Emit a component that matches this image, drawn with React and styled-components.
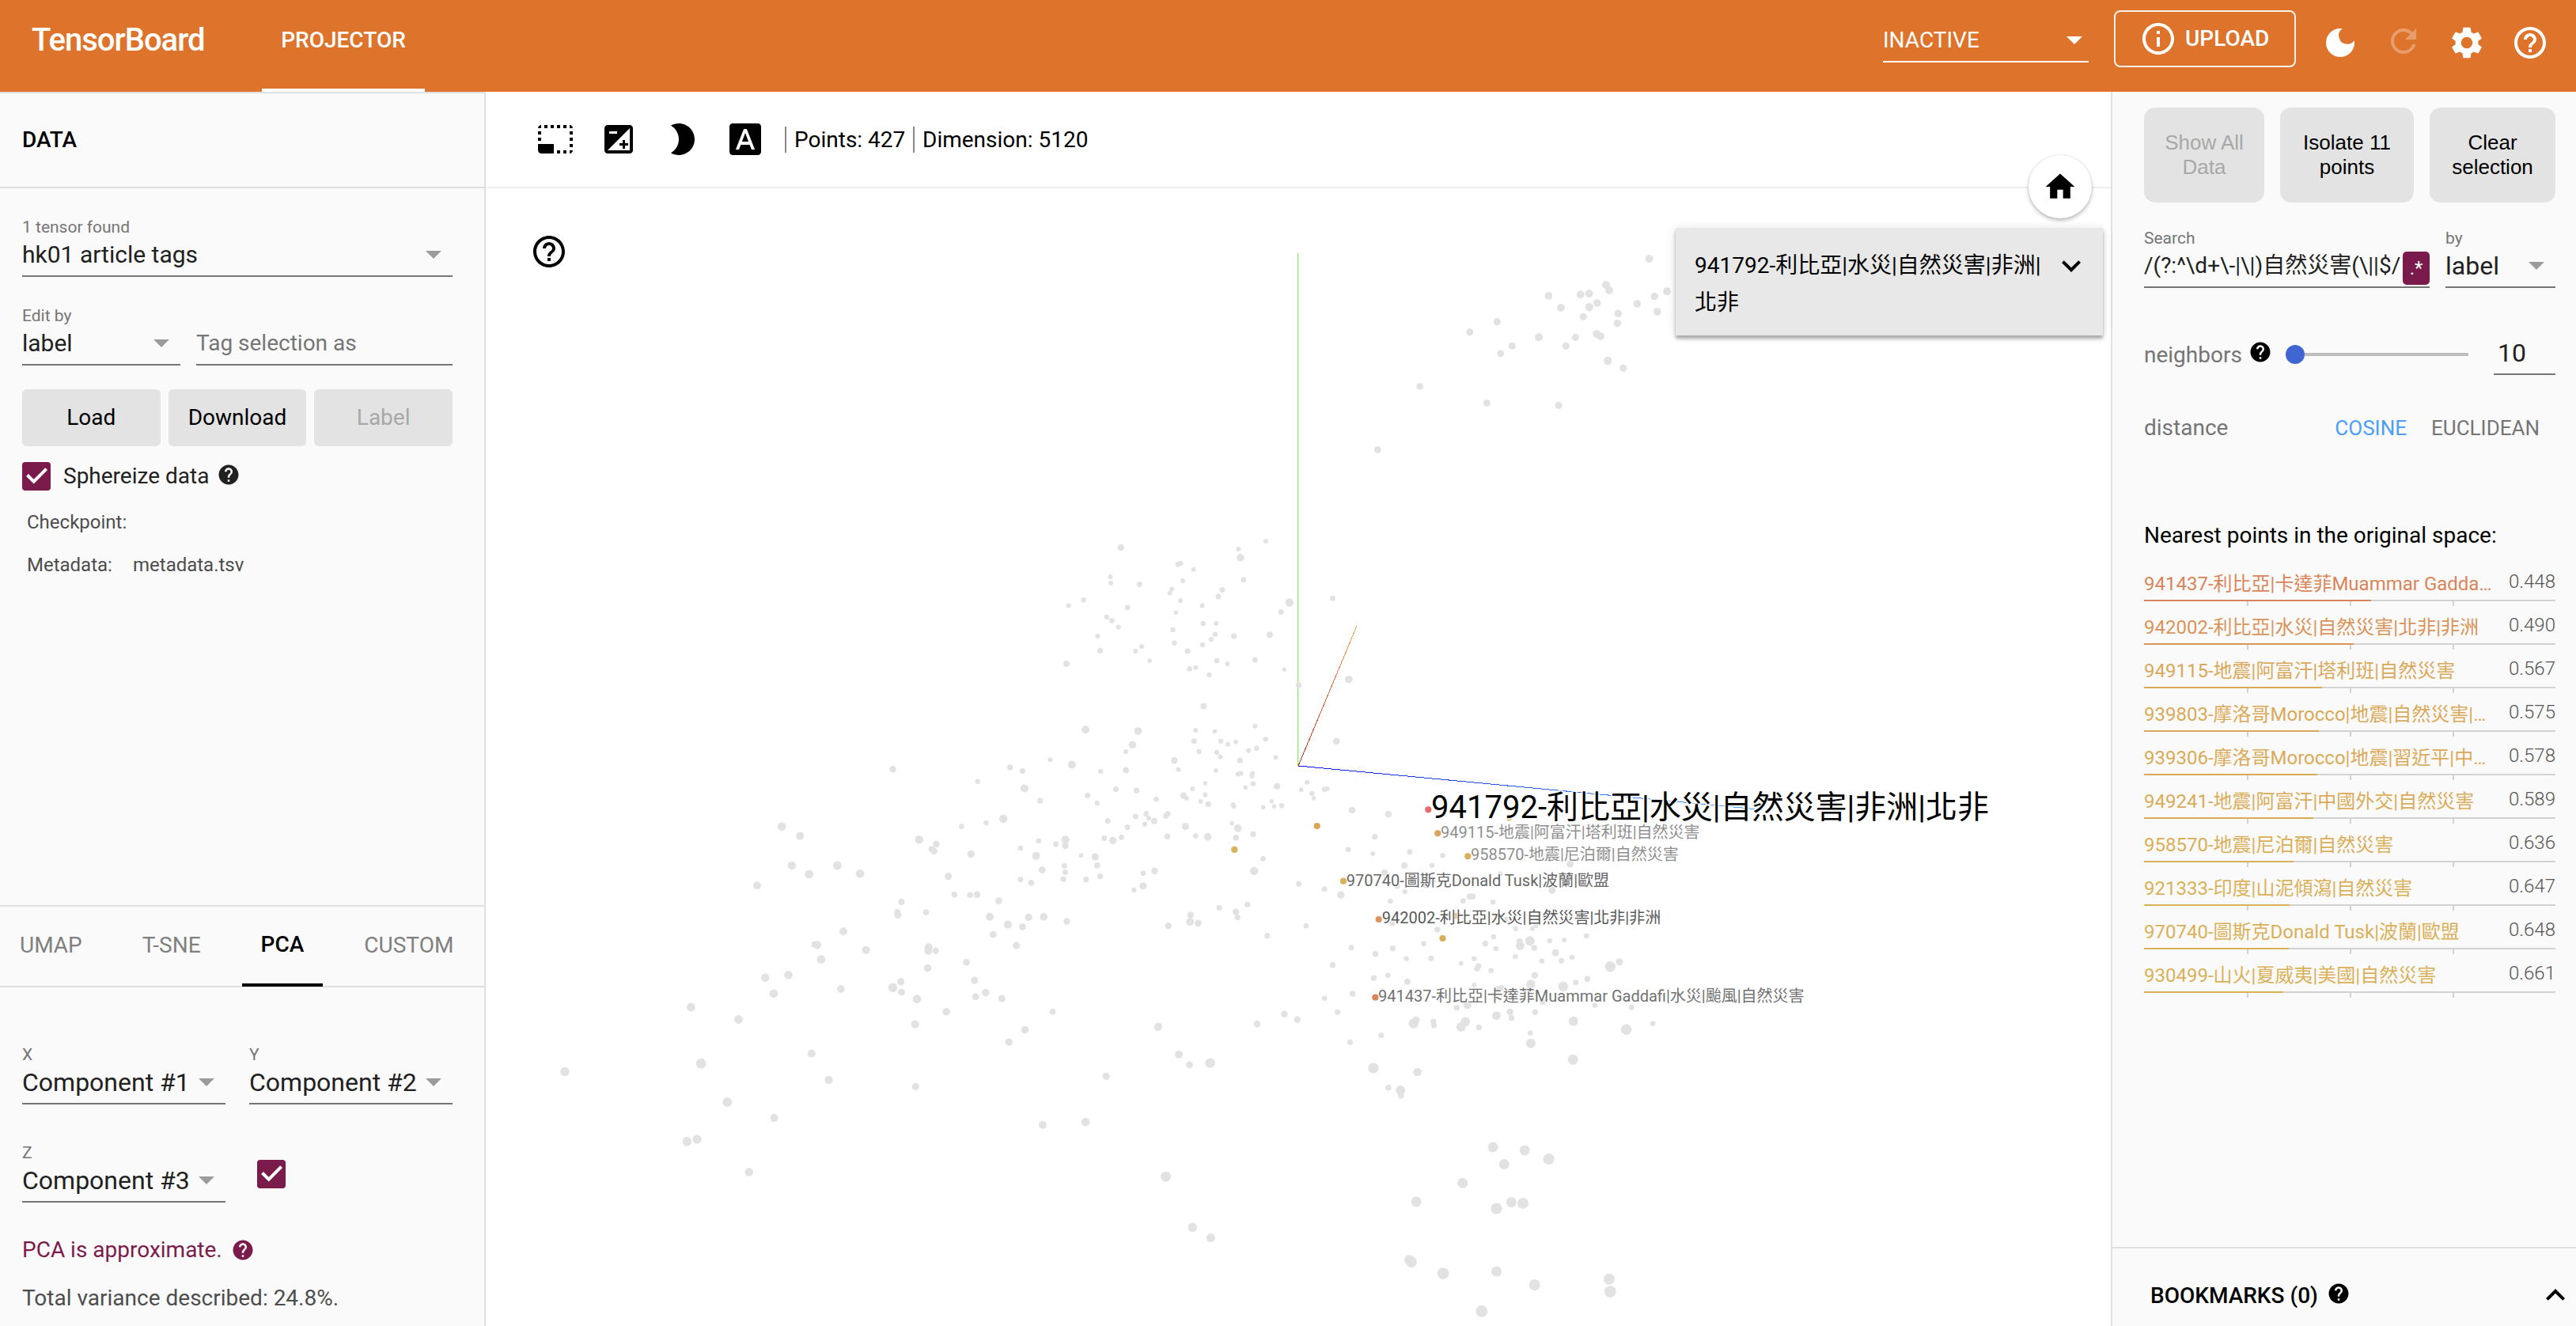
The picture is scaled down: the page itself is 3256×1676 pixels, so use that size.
import React from 'react';
import styled, { createGlobalStyle } from 'styled-components';
import {
  MdBrightness2,
  MdDarkMode,
  MdExpandLess,
  MdExpandMore,
  MdExposure,
  MdFontDownload,
  MdHelp,
  MdHelpOutline,
  MdHome,
  MdInfoOutline,
  MdPhotoSizeSelectSmall,
  MdRefresh,
  MdSettings,
} from 'react-icons/md';

const GlobalStyle = createGlobalStyle`
  * { box-sizing: border-box; }
  html, body { margin: 0; padding: 0; }
  body {
    font-family: Roboto, "Noto Sans CJK TC", sans-serif;
    font-size: 28px;
    color: #212121;
    background: #fff;
    overflow: hidden;
  }
  svg { display: block; flex: none; }
`;

const accent = '#7b1b4b';
const line = '#e0e0e0';

/* ---------- page frame ---------- */

const Page = styled.div`
  display: flex;
  flex-direction: column;
  width: 3256px;
  height: 1676px;
`;

const Header = styled.header`
  display: flex;
  align-items: flex-start;
  flex: none;
  height: 116px;
  background: #de742c;
  color: #fff;
`;

const Brand = styled.h1`
  margin: 0;
  width: 331px;
  padding-left: 40px;
  font-size: 40px;
  font-weight: 500;
  letter-spacing: -1px;
  line-height: 102px;
`;

const NavTab = styled.div`
  height: 116px;
  width: 206px;
  border-bottom: 4px solid #fff;
  text-align: center;
  font-weight: 500;
  line-height: 102px;
`;

const Spacer = styled.div`
  flex: 1;
`;

const ReloadSelect = styled.div`
  display: flex;
  align-items: center;
  justify-content: space-between;
  width: 260px;
  height: 54px;
  margin: 25px 32px 0 0;
  padding-right: 8px;
  border-bottom: 2px solid #fff;
  line-height: 52px;
`;

const Caret = styled.span`
  flex: none;
  border: 10px solid transparent;
  border-bottom-width: 0;
  border-top-color: ${(p) => p.$color || '#9b9b9b'};
`;

const UploadButton = styled.div`
  display: flex;
  align-items: center;
  gap: 10px;
  width: 230px;
  height: 72px;
  margin: 13px 32px 0 0;
  padding-left: 30px;
  border: 2px solid rgba(255, 255, 255, 0.9);
  border-radius: 8px;
  font-weight: 500;
  line-height: 68px;
`;

const HeaderIcons = styled.div`
  display: flex;
  gap: 32px;
  margin: 30px 34px 0 0;
`;

const HeaderIcon = styled.span`
  margin-top: ${(p) => (p.$disabled ? '-2px' : '0')};
  opacity: ${(p) => (p.$disabled ? 0.3 : 1)};
`;

const Body = styled.main`
  display: flex;
  flex: 1;
  min-height: 0;
`;

/* ---------- shared form parts ---------- */

const Field = styled.div`
  display: flex;
  flex-direction: column;
  width: ${(p) => p.$w}px;
  height: 76px;
  border-bottom: 2px solid #757575;
`;

const FieldLabel = styled.div`
  height: 26px;
  line-height: 26px;
  font-size: 21px;
  color: #757575;
`;

const FieldValue = styled.div`
  display: flex;
  align-items: center;
  justify-content: space-between;
  height: 44px;
  padding-right: ${(p) => (p.$flush ? 0 : 14)}px;
  font-size: ${(p) => p.$size || 30}px;
  line-height: 44px;
  white-space: nowrap;
  color: ${(p) => (p.$placeholder ? '#757575' : '#212121')};
`;

const CheckMark = styled.span`
  display: block;
  width: 36px;
  height: 36px;
  border-radius: 4px;
  background: ${accent};
`;

function Checkbox() {
  return (
    <CheckMark>
      <svg width="36" height="36" viewBox="0 0 36 36" fill="none" stroke="#fff" strokeWidth="4">
        <path d="M6.5 16.5 L14.7 24.6 L30.6 8.6" />
      </svg>
    </CheckMark>
  );
}

function Select({ label, value, width, size }) {
  return (
    <Field $w={width}>
      <FieldLabel>{label}</FieldLabel>
      <FieldValue $size={size}>
        <span>{value}</span>
        <Caret />
      </FieldValue>
    </Field>
  );
}

/* ---------- left panel ---------- */

const LeftPanel = styled.aside`
  display: flex;
  flex-direction: column;
  flex: none;
  width: 614px;
  background: #fafafa;
  border-top: 2px solid ${line};
  border-right: 2px solid ${line};
`;

const PanelTitle = styled.h2`
  margin: 0;
  height: 120px;
  padding-left: 28px;
  border-bottom: 2px solid ${line};
  font-size: 28px;
  font-weight: 500;
  line-height: 118px;
  color: #000;
`;

const DataForm = styled.section`
  display: flex;
  flex-direction: column;
  padding: 36px 40px 0 28px;
`;

const FieldRow = styled.div`
  display: flex;
  justify-content: space-between;
  margin-top: ${(p) => p.$mt}px;
`;

const ButtonRow = styled.div`
  display: grid;
  grid-template-columns: repeat(3, 1fr);
  gap: 10px;
  margin-top: 30px;
`;

const Button = styled.div`
  height: 72px;
  border-radius: 6px;
  background: #e3e3e3;
  text-align: center;
  line-height: 72px;
  color: ${(p) => (p.$disabled ? '#a8a8a8' : '#000')};
`;

const CheckRow = styled.div`
  display: flex;
  align-items: center;
  height: 36px;
  margin: 20px 0 13px;
  line-height: 36px;
`;

const CheckLabel = styled.span`
  margin: 0 10px 0 16px;
`;

const CheckHint = styled.span`
  margin-top: -4px;
`;

const MetaRow = styled.div`
  display: flex;
  height: 54px;
  padding-left: 6px;
  font-size: 24px;
  line-height: 54px;
  color: #4d4d4d;
`;

const MetaKey = styled.span`
  width: 134px;
`;

const ProjectionSection = styled.section`
  margin-top: auto;
  height: 532px;
  border-top: 2px solid ${line};
`;

const Tabs = styled.div`
  display: flex;
  gap: 28px;
  height: 102px;
  padding-left: 1px;
  border-bottom: 2px solid ${line};
`;

const Tab = styled.div`
  height: 101px;
  padding: 0 24px;
  border-bottom: 4px solid ${(p) => (p.$active ? '#000' : 'transparent')};
  font-weight: ${(p) => (p.$active ? 500 : 400)};
  line-height: ${(p) => (p.$active ? 95 : 98)}px;
  color: ${(p) => (p.$active ? '#000' : '#808080')};
`;

const PcaForm = styled.div`
  padding: 72px 40px 0 28px;
`;

const CheckSlot = styled.div`
  width: 247px;
  padding-top: 22px;
`;

const Notice = styled.div`
  display: flex;
  align-items: center;
  gap: 11px;
  height: 36px;
  margin-top: 42px;
  line-height: 36px;
  color: ${accent};
`;

const Variance = styled.div`
  margin-top: 25px;
  line-height: 36px;
  color: #4d4d4d;
`;

/* ---------- centre ---------- */

const Center = styled.section`
  display: flex;
  flex-direction: column;
  flex: 1;
  min-width: 0;
  background: #fff;
`;

const Toolbar = styled.div`
  display: flex;
  align-items: center;
  flex: none;
  height: 122px;
  padding-left: 64px;
  border-bottom: 2px solid #eee;
  color: #000;
`;

const ToolIcons = styled.div`
  display: flex;
  gap: 32px;
  margin-right: 26px;
`;

const Stat = styled.div`
  width: ${(p) => p.$w}px;
  padding-left: 10px;
  border-left: 2px solid #888;
  line-height: 33px;
  white-space: nowrap;
`;

const Stage = styled.div`
  position: relative;
  flex: 1;
`;

const StageHelp = styled.div`
  position: absolute;
  left: 56px;
  top: 56px;
  color: #000;
`;

const HomeButton = styled.div`
  position: absolute;
  left: 1950px;
  top: -42px;
  display: flex;
  align-items: center;
  justify-content: center;
  width: 80px;
  height: 80px;
  border-radius: 50%;
  background: #fff;
  color: #000;
  box-shadow: 0 3px 5px rgba(0, 0, 0, 0.24), 0 0 3px rgba(0, 0, 0, 0.12);
`;

const InfoCard = styled.div`
  position: absolute;
  left: 1504px;
  top: 50px;
  display: flex;
  justify-content: space-between;
  width: 540px;
  height: 136px;
  padding: 24px 16px 0 24px;
  background: #e8e8e8;
  color: #000;
  box-shadow: 0 4px 4px rgba(0, 0, 0, 0.3), 0 1px 12px rgba(0, 0, 0, 0.12);
`;

const InfoText = styled.div`
  width: 442px;
  line-height: 47px;
  word-break: break-all;
`;

/* Point clouds: each is stored in local units with its own origin and scale. */
const clouds = [
  {
    origin: [1700, 300],
    scale: [3, 3],
    points: [
      [1154,81,5],[990,181,5],[1002,201,5],[772,222,4.8],[893,217,5],[926,213,5],[1174,224,4.8],[1221,205,5],[956,249,4.8],
      [819,267,5],[926,264,5.2],[1108,252,4.8],[1184,282,4.8],[904,301,4.6],[1036,289,4.8],[1033,326,4.8],[577,320,4.6],
      [473,359,4.6],[735,379,5],[874,379,4.6],[954,366,4.8],[969,375,5],[634,412,4.7],[838,412,4.6],[590,441,4.4],
      [997,468,5.2],[1055,496,4.6],[284,565,4.4],[538,628,4.4],[810,637,4.6],[124,805,4.4],
    ],
  },
  {
    origin: [640, 660],
    scale: [1.568, 1.7422],
    points: [
      [1218,56,4.2],[1451,59,3],[1455,78,4.8],[1331,93,3.3],[1336,91,3.3],[1362,104,3],[1197,120,3],[1198,134,3],
      [1255,137,3.3],[1341,129,3],[1461,127,3.3],[1319,147,3],[1315,156,3],[1419,149,3.5],[1411,164,3.5],[1144,171,3.3],
      [1114,184,3],[1336,173,3],[1379,184,3],[1231,188,3.3],[1327,199,2.8],[1190,209,3.3],[1200,217,3.3],[1213,231,3.1],
      [1381,223,3.2],[1407,223,3],[1321,237,3.2],[1405,247,3.2],[1397,258,3.2],[1442,251,3.6],[1172,251,3],[1324,266,3.2],
      [1380,270,3.2],[1259,274,3],[1247,284,3],[1177,283,3.5],[1350,284,3.6],[1275,305,2.8],[1408,305,3.3],[1429,312,3],
      [1484,303,3.5],[1110,312,4],[1354,323,3.3],[1366,320,3],[1393,336,3.2],[1382,405,4],[1484,449,3],[1148,457,5],
      [1252,460,4.8],[1366,458,3],[1404,461,2.8],[1504,478,2.8],[1363,482,3.4],[1416,482,3.2],[1430,489,3],[1446,484,2.8],
      [1241,490,4.8],[1487,498,3.2],[1471,503,3],[1228,505,3],[1373,505,3.2],[1408,507,3.2],[1415,517,3],[1324,525,4.2],
      [1454,525,3.6],[1078,523,3],[1121,534,5],[998,540,3.8],[1023,548,3.6],[1178,549,3.2],[1228,546,3.8],[1332,545,3],
      [1406,547,2.9],[1450,555,3],[1456,553,3],[1479,553,3],[1478,559,3],[766,544,4.2],[934,571,3.2],[1027,586,5],
      [1385,575,2.8],[1480,576,3.2],[1465,584,2.8],[1360,587,3],[1208,588,3.6],[1249,591,3.6],[1152,602,3.5],[1058,613,3.6],
      [1342,602,4],[1385,600,3],[1348,608,2.8],[1288,610,3.2],[1376,615,3],[1391,621,3.6],[1440,622,3],[1442,626,3],
      [1171,619,3.2],[1500,628,2.8],[985,653,5.2],[1268,642,3.4],[1311,642,3.6],[1307,647,3.4],[1247,648,3.4],[1273,652,3],
      [1284,658,4],[1265,665,3.2],[1192,658,3.6],[951,662,3.2],[902,670,3.4],[1231,672,3.4],[1346,670,4.6],[1438,663,2.8],
      [1450,674,4.8],[546,670,5.4],[582,691,5],[1480,687,3.6],[1446,695,3.8],[1366,691,3.4],[1390,693,4.8],[1310,692,3.8],
      [1219,694,3.4],[1185,696,3.4],[1202,701,4.6],[1108,699,5],[1108,712,4.2],[1055,702,3.4],[1089,709,3.4],[818,699,5.2],
      [852,709,4.2],[843,720,4],[848,725,4],[921,731,4.6],[1019,718,3.4],[1050,735,5],[1139,734,3],[1167,737,4.6],
      [1500,741,3.4],[566,756,5.2],[600,775,5.4],[656,756,5.4],[701,774,5.2],[497,800,5],[876,780,4.6],[1062,766,4.4],
      [1106,757,3.4],[1171,756,3.8],[1108,771,3.4],[1104,786,3.6],[1019,787,3.4],[1040,794,3.8],[1149,787,3.6],[1177,780,3.6],
      [1262,773,3.4],[1285,768,4.2],[1262,801,4.6],[1244,810,3.2],[1482,768,5.2],[783,836,4],[888,820,3.8],[919,821,3.8],
      [933,820,4.2],[976,834,4.4],[775,858,3.8],[776,865,4.6],[832,859,3.8],[958,869,5],[1035,870,4.6],[1065,869,4.8],
      [994,886,5],[1023,891,4.4],[1111,879,4.2],[965,908,4.4],[668,901,5],[1011,932,4.6],[1312,889,4.2],[1356,865,4],
      [1355,880,5],[1371,883,4.4],[1413,849,3.6],[1446,858,4.2],[1449,870,3.6],[1469,842,3.6],[611,930,4],[616,931,5.2],
      [713,942,5],[837,936,5],[836,944,5],[851,944,4.2],[624,963,5.4],[912,969,4.4],[835,982,4.8],[559,997,5.4],
      [513,1003,5.2],[663,1028,4.8],[766,1025,5.8],[782,1012,4.6],[783,1035,4.4],[928,1009,4.6],[950,1036,4.8],[530,1038,5.4],
      [814,1050,5.4],[930,1045,4.4],[982,1049,4.6],[366,1068,5.4],[872,1078,4.8],[1083,1078,3.8],[460,1095,5.4],[810,1106,5],
      [1292,1111,5.2],[1488,1105,4.2],[1028,1118,4.8],[996,1145,4.8],[605,1170,5],[1333,1172,5],[386,1192,6.4],[1354,1195,4.4],
      [1395,1191,6.2],[116,1210,5.8],[1189,1220,4.6],[639,1228,5.2],[811,1243,4.6],[438,1277,6],[531,1312,5],[1063,1327,5],
      [1148,1321,5.4],[358,1364,5.8],[378,1359,5.8],[481,1431,5.4],[1307,1441,6.4],[1360,1553,5.8],[1396,1576,5.6],
    ],
  },
  {
    origin: [1600, 640],
    scale: [2.24, 1.5223],
    points: [
      [189,177,3.5],[67,185,5.2],[43,203,3.5],[11,247,4],[0,67,3],[52,314,2.7],[93,344,3.7],[235,333,4.8],[200,452,4.3],
      [28,483,3],[0,448,3],[643,1233,6.5],[733,1239,6.5],[675,1266,6.5],[801,1256,7],[557,1302,6.5],[426,1338,6.5],
      [695,1339,6.5],[728,1341,7],[653,1351,7],[406,1450,6.3],[412,1454,7],[502,1476,7.4],[653,1472,6.6],[761,1498,7],
      [972,1487,7],[975,1511,7.4],[611,1549,7.4],
    ],
  },
  {
    origin: [1600, 960],
    scale: [1.6333, 3],
    points: [
      [23,101,4],[85,87,3],[73,115,2.8],[121,113,3.2],[127,110,2.8],[95,129,3.2],[99,147,2.8],[12,158,2.7],[17,178,2.7],
      [33,175,3.2],[178,192,4.3],[253,207,4.3],[225,293,3.6],[170,341,3.3],[221,358,3],[297,350,3.5],[365,364,3.3],
      [286,402,4],[343,401,3.3],[245,429,4],[628,396,4.5],[484,433,3],[68,471,3.5],[121,491,3.5],[155,514,4.7],
      [271,480,3.5],[330,478,3.5],[287,501,3.1],[257,537,3.3],[591,496,4.5],[421,520,4],[427,520,4],[407,536,3.5],
      [469,541,3.3],[345,460,3.5],[261,622,3.5],[83,631,3.3],[3,668,3.6],[354,645,3.8],[516,642,3],[550,641,3],
      [558,630,3],[495,605,3],[470,672,3.3],[326,698,3.3],[453,698,3.7],[475,717,3.3],[525,706,5.5],[524,690,4],
      [545,688,6],[554,714,3.8],[586,688,3.3],[616,684,3],[662,668,3.3],[176,713,3.5],[262,716,3.7],[226,737,3.8],
      [290,755,3.3],[341,754,3.6],[430,755,3.3],[515,747,3.2],[598,733,4.5],[632,750,3.3],[570,764,3.3],[610,763,3.5],
      [138,779,3.7],[403,773,3],[439,783,3.7],[436,793,3.7],[465,800,3.3],[711,785,6.7],[730,767,4.5],[555,818,4.2],
      [252,818,3.3],[223,829,3.7],[292,842,4],[430,855,3],[547,852,5.8],[614,860,6.3],[640,845,3.5],[664,832,3.8],
      [478,872,4.5],[486,866,3.7],[179,888,3.8],[121,905,3.3],[545,866,3.8],[572,918,4],[416,930,5.2],[394,941,3.7],
      [679,932,3.3],[755,940,3.5],[148,958,3.5],[38,965,4.2],[65,986,4.2],[476,971,5.5],[504,957,4.3],[556,958,3.7],
      [507,980,3.7],[305,1001,6.2],[310,988,4.5],[346,994,3.7],[347,1008,3.7],[412,994,5.8],[403,1014,6],[440,1016,3.6],
      [635,992,6],[799,1001,3.3],[744,1024,6.7],[238,1046,3.5],[174,1072,3.5],[546,1037,3.3],[547,1076,6],[634,1138,6.5],
      [222,1170,6.7],[313,1185,5.2],[253,1244,3.8],[278,1254,6],[279,1275,3.7],
    ],
  },
];

const selected = [
  [1805.3, 1023.3, '#e86b6b'],
  [1664.7, 1044, '#d9a854'],
  [1817.3, 1053.3, '#d9a65b'],
  [1855.3, 1082.3, '#d9b05b'],
  [1698, 1113.7, '#d9b05b'],
  [1742.7, 1162, '#da955d'],
  [1823.5, 1186, '#d9ad5b'],
  [1738.4, 1260.7, '#d8865b'],
  [1907.3, 1033.3, '#d9ad5b'],
  [1839.5, 1157.5, '#e6c78c'],
  [1560.3, 1073.9, '#d9b05b'],
];

const labels = [
  { x: 1821, y: 1059, size: 20, color: '#8f8f8f', text: '949115-地震|阿富汗|塔利班|自然災害' },
  { x: 1859, y: 1087, size: 20, color: '#8f8f8f', text: '958570-地震|尼泊爾|自然災害' },
  { x: 1701.7, y: 1119.5, size: 20, color: '#666', text: '970740-圖斯克Donald Tusk|波蘭|歐盟' },
  { x: 1746.7, y: 1167, size: 20, color: '#585858', text: '942002-利比亞|水災|自然災害|北非|非洲' },
  { x: 1742, y: 1266, size: 20, color: '#727272', text: '941437-利比亞|卡達菲Muammar Gaddafi|水災|颱風|自然災害' },
  { x: 1809, y: 1034, size: 40, color: '#000', text: '941792-利比亞|水災|自然災害|非洲|北非' },
];

const Label = styled.text`
  font-family: Roboto, 'Noto Sans CJK TC', sans-serif;
  stroke: #fff;
  stroke-opacity: 0.8;
  paint-order: stroke;
`;

function Scatter() {
  return (
    <svg width="2054" height="1438" viewBox="614 238 2054 1438">
      <defs>
        <linearGradient id="axisX" gradientUnits="userSpaceOnUse" x1="1641" y1="968" x2="1715" y2="791">
          <stop offset="0" stopColor="#dd2211" />
          <stop offset="1" stopColor="#f2a354" />
        </linearGradient>
        <linearGradient id="axisZ" gradientUnits="userSpaceOnUse" x1="1641" y1="968" x2="2228" y2="1024">
          <stop offset="0" stopColor="#0a14ee" />
          <stop offset="1" stopColor="#4ba4ff" />
        </linearGradient>
      </defs>
      <g fill="none" shapeRendering="crispEdges">
        <path d="M1640.5 320 V968" stroke="#77f24a" strokeWidth="1" />
        <path d="M1641 968 L1715 791" stroke="url(#axisX)" strokeWidth="1" />
        <path d="M1641 968 L2228 1023.5" stroke="url(#axisZ)" strokeWidth="1" />
      </g>
      {clouds.map((cloud, c) => (
        <g key={c} fill="#e2e2e2">
          {cloud.points.map(([x, y, r], i) => (
            <circle
              key={i}
              cx={(cloud.origin[0] + x / cloud.scale[0]).toFixed(1)}
              cy={(cloud.origin[1] + y / cloud.scale[1]).toFixed(1)}
              r={r}
            />
          ))}
        </g>
      ))}
      {selected.map(([x, y, color]) => (
        <circle key={`${x}-${y}`} cx={x} cy={y} r="4.1" fill={color} />
      ))}
      {labels.map((l) => (
        <Label key={l.text} x={l.x} y={l.y} fontSize={l.size} fill={l.color} strokeWidth={l.size > 30 ? 4 : 2}>
          {l.text}
        </Label>
      ))}
    </svg>
  );
}

/* ---------- right panel ---------- */

const RightPanel = styled.aside`
  display: flex;
  flex-direction: column;
  flex: none;
  width: 588px;
  background: #fafafa;
  border-left: 2px solid ${line};
`;

const Inspector = styled.div`
  flex: 1;
  padding: 20px 26px 0 40px;
`;

const SelectionButtons = styled.div`
  display: grid;
  grid-template-columns: 152px 169px 159px;
  gap: 20px;
`;

const BigButton = styled.div`
  display: flex;
  align-items: center;
  justify-content: center;
  height: 120px;
  padding: 0 20px;
  border-radius: 14px;
  background: #e3e3e3;
  font-family: 'Liberation Sans', Arial, sans-serif;
  font-size: 26px;
  line-height: 31px;
  text-align: center;
  color: ${(p) => (p.$disabled ? '#a8a8a8' : '#000')};
`;

const RegexBadge = styled.span`
  flex: none;
  width: 34px;
  height: 42px;
  margin-top: 6px;
  border-radius: 5px;
  background: ${accent};
  text-align: center;
  font-size: 24px;
  line-height: 42px;
  color: #fff;
`;

const NeighborRow = styled.div`
  display: flex;
  align-items: center;
  height: 52px;
  margin-top: 58px;
  color: #757575;
`;

const HintIcon = styled.span`
  margin: -6px 17px 0 8px;
  color: #000;
`;

const Slider = styled.div`
  display: flex;
  align-items: center;
  width: 231px;
`;

const Knob = styled.span`
  width: 24px;
  height: 24px;
  border-radius: 50%;
  background: #4067d1;
`;

const Track = styled.span`
  flex: 1;
  height: 4px;
  background: #bdbdbd;
`;

const CountInput = styled.div`
  width: 78px;
  height: 52px;
  margin-left: auto;
  padding-left: 5px;
  border-bottom: 2px solid #757575;
  font-size: 32px;
  line-height: 48px;
  color: #212121;
`;

const DistanceRow = styled.div`
  display: flex;
  height: 40px;
  margin-top: 47px;
  padding-right: 20px;
  line-height: 40px;
  color: #757575;
`;

const Metric = styled.span`
  margin-left: ${(p) => (p.$active ? 'auto' : '31px')};
  font-size: 26px;
  color: ${(p) => (p.$active ? '#4a9df8' : '#757575')};
`;

const ListTitle = styled.div`
  margin: 96px 0 8px;
  line-height: 40px;
  color: #000;
`;

const Neighbor = styled.div`
  height: 55px;
  color: ${(p) => p.$color};
`;

const NeighborText = styled.div`
  display: flex;
  justify-content: space-between;
  height: 53px;
  font-size: 24px;
  line-height: 34px;
  white-space: nowrap;
`;

const NeighborName = styled.span`
  padding-top: 16px;
`;

const NeighborValue = styled.span`
  padding-top: 13px;
  font-weight: 300;
  color: #555;
`;

const Bar = styled.div`
  position: relative;
  height: 2px;
  background: #d2d2d2;
`;

const BarFill = styled.div`
  position: relative;
  z-index: 1;
  height: 2px;
  background: currentColor;
`;

const Tick = styled.span`
  position: absolute;
  top: 0;
  left: ${(p) => p.$at}px;
  width: 2px;
  height: 8px;
  background: #d2d2d2;
`;

const Bookmarks = styled.div`
  display: flex;
  align-items: center;
  height: 100px;
  padding: 20px 2px 0 48px;
  border-top: 2px solid ${line};
  font-weight: 500;
  color: #000;
`;

const BookmarkHint = styled.span`
  margin: -4px auto 0 11px;
`;

const neighbors = [
  ['941437-利比亞|卡達菲Muammar Gadda…', 0.448, '#d98559'],
  ['942002-利比亞|水災|自然災害|北非|非洲', 0.49, '#da9359'],
  ['949115-地震|阿富汗|塔利班|自然災害', 0.567, '#daa859'],
  ['939803-摩洛哥Morocco|地震|自然災害|…', 0.575, '#daa959'],
  ['939306-摩洛哥Morocco|地震|習近平|中…', 0.578, '#daaa59'],
  ['949241-地震|阿富汗|中國外交|自然災害', 0.589, '#daac59'],
  ['958570-地震|尼泊爾|自然災害', 0.636, '#daaf59'],
  ['921333-印度|山泥傾瀉|自然災害', 0.647, '#dab059'],
  ['970740-圖斯克Donald Tusk|波蘭|歐盟', 0.648, '#dab059'],
  ['930499-山火|夏威夷|美國|自然災害', 0.661, '#dab159'],
];

export default function App() {
  return (
    <Page>
      <GlobalStyle />
      <Header>
        <Brand>TensorBoard</Brand>
        <NavTab>PROJECTOR</NavTab>
        <Spacer />
        <ReloadSelect>
          <span>INACTIVE</span>
          <Caret $color="#fff" />
        </ReloadSelect>
        <UploadButton>
          <MdInfoOutline size={48} />
          <span>UPLOAD</span>
        </UploadButton>
        <HeaderIcons>
          <HeaderIcon><MdDarkMode size={48} /></HeaderIcon>
          <HeaderIcon $disabled><MdRefresh size={48} /></HeaderIcon>
          <HeaderIcon><MdSettings size={48} /></HeaderIcon>
          <HeaderIcon><MdHelpOutline size={48} /></HeaderIcon>
        </HeaderIcons>
      </Header>

      <Body>
        <LeftPanel>
          <PanelTitle>DATA</PanelTitle>
          <DataForm>
            <Select label="1 tensor found" value="hk01 article tags" width={544} />
            <FieldRow $mt={36}>
              <Select label="Edit by" value="label" width={200} />
              <Field $w={324}>
                <FieldLabel />
                <FieldValue $size={28} $placeholder>Tag selection as</FieldValue>
              </Field>
            </FieldRow>
            <ButtonRow>
              <Button>Load</Button>
              <Button>Download</Button>
              <Button $disabled>Label</Button>
            </ButtonRow>
            <CheckRow>
              <Checkbox />
              <CheckLabel>Sphereize data</CheckLabel>
              <CheckHint><MdHelp size={30} /></CheckHint>
            </CheckRow>
            <MetaRow><MetaKey>Checkpoint:</MetaKey></MetaRow>
            <MetaRow><MetaKey>Metadata:</MetaKey><span>metadata.tsv</span></MetaRow>
          </DataForm>

          <ProjectionSection>
            <Tabs>
              <Tab>UMAP</Tab>
              <Tab>T-SNE</Tab>
              <Tab $active>PCA</Tab>
              <Tab>CUSTOM</Tab>
            </Tabs>
            <PcaForm>
              <FieldRow $mt={0}>
                <Select label="X" value="Component #1" width={257} size={32} />
                <Select label="Y" value="Component #2" width={257} size={32} />
              </FieldRow>
              <FieldRow $mt={48}>
                <Select label="Z" value="Component #3" width={257} size={32} />
                <CheckSlot><Checkbox /></CheckSlot>
              </FieldRow>
              <Notice>
                <span>PCA is approximate.</span>
                <MdHelp size={30} />
              </Notice>
              <Variance>Total variance described: 24.8%.</Variance>
            </PcaForm>
          </ProjectionSection>
        </LeftPanel>

        <Center>
          <Toolbar>
            <ToolIcons>
              <MdPhotoSizeSelectSmall size={48} />
              <MdExposure size={48} />
              <MdBrightness2 size={48} />
              <MdFontDownload size={48} />
            </ToolIcons>
            <Stat $w={162}>Points: 427</Stat>
            <Stat $w={240}>Dimension: 5120</Stat>
          </Toolbar>
          <Stage>
            <Scatter />
            <StageHelp><MdHelpOutline size={48} /></StageHelp>
            <HomeButton><MdHome size={44} /></HomeButton>
            <InfoCard>
              <InfoText>941792-利比亞|水災|自然災害|非洲|北非</InfoText>
              <MdExpandMore size={48} />
            </InfoCard>
          </Stage>
        </Center>

        <RightPanel>
          <Inspector>
            <SelectionButtons>
              <BigButton $disabled>Show All Data</BigButton>
              <BigButton>Isolate 11 points</BigButton>
              <BigButton>Clear selection</BigButton>
            </SelectionButtons>
            <FieldRow $mt={32}>
              <Field $w={361}>
                <FieldLabel>Search</FieldLabel>
                <FieldValue $size={28} $flush>
                  <span>{'/(?:^\\d+\\-|\\|)自然災害(\\||$/'}</span>
                  <RegexBadge>.*</RegexBadge>
                </FieldValue>
              </Field>
              <Select label="by" value="label" width={139} size={32} />
            </FieldRow>
            <NeighborRow>
              <span>neighbors</span>
              <HintIcon><MdHelp size={30} /></HintIcon>
              <Slider><Knob /><Track /></Slider>
              <CountInput>10</CountInput>
            </NeighborRow>
            <DistanceRow>
              <span>distance</span>
              <Metric $active>COSINE</Metric>
              <Metric>EUCLIDEAN</Metric>
            </DistanceRow>
            <ListTitle>Nearest points in the original space:</ListTitle>
            {neighbors.map(([name, distance, color]) => (
              <Neighbor key={name} $color={color}>
                <NeighborText>
                  <NeighborName>{name}</NeighborName>
                  <NeighborValue>{distance.toFixed(3)}</NeighborValue>
                </NeighborText>
                <Bar>
                  <BarFill style={{ width: `${(1 - distance) * 100}%` }} />
                  <Tick $at={130} />
                  <Tick $at={260} />
                  <Tick $at={390} />
                </Bar>
              </Neighbor>
            ))}
          </Inspector>
          <Bookmarks>
            <span>BOOKMARKS (0)</span>
            <BookmarkHint><MdHelp size={30} /></BookmarkHint>
            <MdExpandLess size={48} />
          </Bookmarks>
        </RightPanel>
      </Body>
    </Page>
  );
}
